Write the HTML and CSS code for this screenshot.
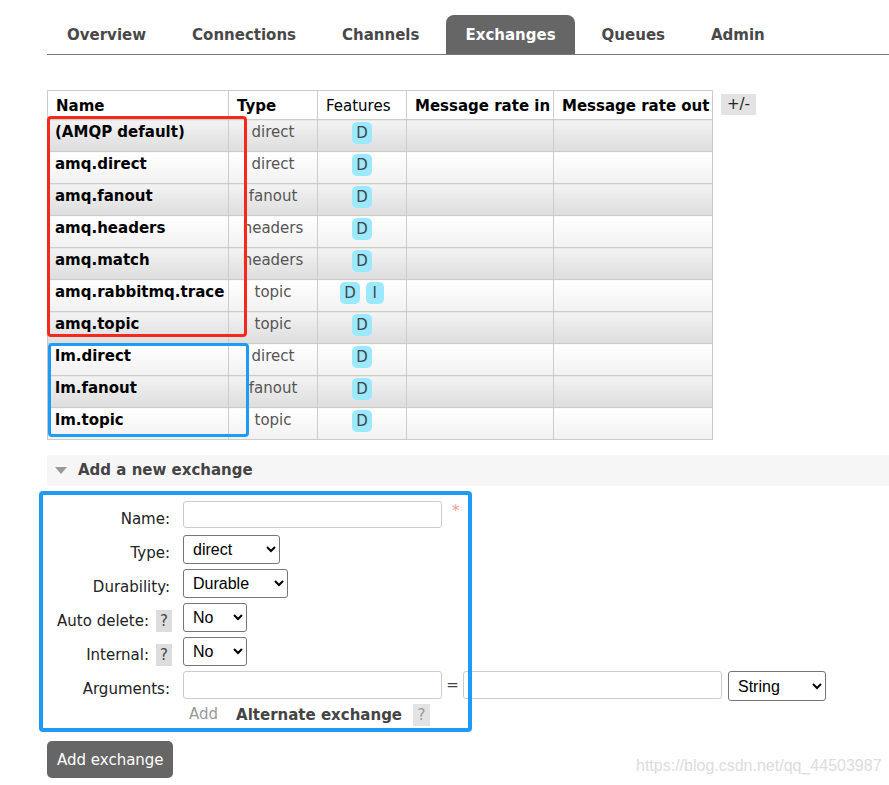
FILE: index.html
```html
<!DOCTYPE html>
<html>
<head>
<meta charset="utf-8">
<title>Exchanges</title>
<link rel="stylesheet" href="styles.css">
</head>
<body>
<div class="page">
  <ul class="tabs">
    <li class="tab">Overview</li>
    <li class="tab">Connections</li>
    <li class="tab">Channels</li>
    <li class="tab active">Exchanges</li>
    <li class="tab">Queues</li>
    <li class="tab">Admin</li>
  </ul>

  <div class="list-wrap">
    <table class="list">
      <thead>
        <tr>
          <th class="c-name">Name</th>
          <th class="c-type">Type</th>
          <th class="c-feat plain">Features</th>
          <th class="c-in">Message rate in</th>
          <th class="c-out">Message rate out</th>
        </tr>
      </thead>
      <tbody>
        <tr class="alt1"><td class="name">(AMQP default)</td><td class="type">direct</td><td class="feat"><span class="badge">D</span></td><td></td><td></td></tr>
        <tr class="alt2"><td class="name">amq.direct</td><td class="type">direct</td><td class="feat"><span class="badge">D</span></td><td></td><td></td></tr>
        <tr class="alt1"><td class="name">amq.fanout</td><td class="type">fanout</td><td class="feat"><span class="badge">D</span></td><td></td><td></td></tr>
        <tr class="alt2"><td class="name">amq.headers</td><td class="type">headers</td><td class="feat"><span class="badge">D</span></td><td></td><td></td></tr>
        <tr class="alt1"><td class="name">amq.match</td><td class="type">headers</td><td class="feat"><span class="badge">D</span></td><td></td><td></td></tr>
        <tr class="alt2"><td class="name">amq.rabbitmq.trace</td><td class="type">topic</td><td class="feat"><span class="badge">D</span><span class="badge">I</span></td><td></td><td></td></tr>
        <tr class="alt1"><td class="name">amq.topic</td><td class="type">topic</td><td class="feat"><span class="badge">D</span></td><td></td><td></td></tr>
        <tr class="alt2"><td class="name">lm.direct</td><td class="type">direct</td><td class="feat"><span class="badge">D</span></td><td></td><td></td></tr>
        <tr class="alt1"><td class="name">lm.fanout</td><td class="type">fanout</td><td class="feat"><span class="badge">D</span></td><td></td><td></td></tr>
        <tr class="alt2"><td class="name">lm.topic</td><td class="type">topic</td><td class="feat"><span class="badge">D</span></td><td></td><td></td></tr>
      </tbody>
    </table>
    <span class="toggle">+/-</span>
  </div>

  <section class="section">
    <h2 class="section-head"><span class="arrow"></span>Add a new exchange</h2>
    <form class="form">
      <div class="frow">
        <label class="flabel">Name:</label>
        <div class="field"><input class="text" type="text"><span class="req">*</span></div>
      </div>
      <div class="frow">
        <label class="flabel">Type:</label>
        <div class="field">
          <select class="sel sel-type"><option>direct</option><option>fanout</option><option>headers</option><option>topic</option></select>
        </div>
      </div>
      <div class="frow">
        <label class="flabel">Durability:</label>
        <div class="field">
          <select class="sel sel-dur"><option>Durable</option><option>Transient</option></select>
        </div>
      </div>
      <div class="frow">
        <label class="flabel">Auto delete:<span class="help">?</span></label>
        <div class="field">
          <select class="sel sel-no"><option>No</option><option>Yes</option></select>
        </div>
      </div>
      <div class="frow">
        <label class="flabel">Internal:<span class="help">?</span></label>
        <div class="field">
          <select class="sel sel-no"><option>No</option><option>Yes</option></select>
        </div>
      </div>
      <div class="frow">
        <label class="flabel">Arguments:</label>
        <div class="field">
          <input class="text arg" type="text"><span class="eq">=</span><input class="text arg" type="text">
          <select class="sel sel-str"><option>String</option><option>Number</option><option>Boolean</option><option>List</option></select>
        </div>
      </div>
      <div class="addrow">
        <span class="add">Add</span>
        <span class="alt">Alternate exchange</span>
        <span class="help muted">?</span>
      </div>
    </form>
    <button class="btn" type="button">Add exchange</button>
  </section>

  <div class="mark mark-red"></div>
  <div class="mark mark-blue1"></div>
  <div class="mark mark-blue2"></div>
  <div class="watermark">https://blog.csdn.net/qq_44503987</div>
</div>
</body>
</html>
```

FILE: styles.css
```css
* { box-sizing: border-box; }

body {
  margin: 0;
  background: #fff;
  color: #000;
  font-family: "DejaVu Sans", Verdana, sans-serif;
  font-size: 15px;
}

.page {
  position: relative;
  padding-left: 47px;
  min-height: 785px;
  overflow: hidden;
}

/* tabs */
.tabs {
  list-style: none;
  margin: 0;
  padding: 15px 0 0;
  display: flex;
  gap: 6px;
  border-bottom: 1px solid #777;
}
.tab {
  height: 39px;
  padding: 1px 20px 0;
  line-height: 38px;
  font-weight: bold;
  color: #484848;
  border-radius: 8px 8px 0 0;
}
.tab.active {
  background: #666;
  color: #fff;
  padding: 1px 19px 0;
  margin: 0 1px;
}

/* list table */
.list-wrap {
  display: flex;
  align-items: flex-start;
  margin-top: 35px;
}
.list {
  border-collapse: collapse;
  table-layout: fixed;
  width: 666px;
}
.list th, .list td {
  border: 1px solid #ccc;
  padding: 0 8px;
}
.list th {
  height: 29px;
  padding-top: 2px;
  text-align: left;
  font-weight: bold;
  background: #fff;
  vertical-align: middle;
  white-space: nowrap;
}
.list th.plain { font-weight: normal; }
.c-name { width: 181px; }
.c-type { width: 89px; }
.c-feat { width: 89px; }
.c-in { width: 147px; }
.c-out { width: 159px; }

.list tbody tr { height: 32px; }
.list td {
  vertical-align: top;
  padding-top: 1px;
  line-height: 22px;
  white-space: nowrap;
}
.list tr.alt1 td { background: linear-gradient(#f3f3f3, #dddddd); }
.list tr.alt2 td { background: linear-gradient(#ffffff, #f1f1f1); }
.list td.name { font-weight: bold; padding-left: 7px; }
.list td.type { text-align: center; color: #555; }
.list td.feat { text-align: center; padding-top: 2px; }

.badge {
  display: inline-block;
  min-width: 18px;
  padding: 0 4px;
  line-height: 22px;
  border-radius: 5px;
  background: #9ae9ff;
  color: #444;
  text-align: center;
  margin: 0 3px;
}

.toggle {
  margin: 4px 0 0 8px;
  padding: 0 6px;
  line-height: 21px;
  background: #e3e3e3;
  color: #222;
}

/* section */
.section { margin-top: 15px; }
.section-head {
  margin: 0;
  height: 31px;
  line-height: 31px;
  padding-left: 8px;
  background: #f6f6f6;
  font-size: 15px;
  font-weight: bold;
  color: #444;
  display: flex;
  align-items: center;
}
.arrow {
  width: 0;
  height: 0;
  border-left: 6.5px solid transparent;
  border-right: 6.5px solid transparent;
  border-top: 7px solid #999;
  margin-right: 11px;
}

.form { padding-top: 15px; }
.frow {
  display: flex;
  height: 34px;
}
.flabel {
  width: 123px;
  margin-right: 13px;
  padding-top: 7px;
  line-height: 22px;
  text-align: right;
  color: #222;
  white-space: nowrap;
}
.field {
  display: flex;
  align-items: flex-start;
}
.help {
  display: inline-block;
  width: 16px;
  line-height: 22px;
  margin-left: 7px;
  margin-right: -2px;
  background: #ddd;
  color: #444;
  text-align: center;
  vertical-align: top;
}
.help.muted {
  background: #e3e3e3;
  color: #999;
  margin: 0 0 0 11px;
  width: 17px;
}

.text {
  width: 259px;
  height: 27px;
  margin: 0;
  padding: 0 4px;
  border: 1px solid #ccc;
  border-radius: 3px;
  background: #fff;
  font-family: "Liberation Sans", Arial, sans-serif;
  font-size: 15px;
}
.text.arg { height: 28px; }
.req {
  margin-left: 10px;
  color: #f79a9a;
  font-size: 15px;
  line-height: 20px;
}
.eq {
  width: 21px;
  line-height: 28px;
  text-align: center;
  color: #444;
}

.sel {
  height: 29px;
  margin: 0;
  padding: 0 0 0 5px;
  border: 1px solid #767676;
  border-radius: 3px;
  background: #fff;
  color: #000;
  font-family: "Liberation Sans", Arial, sans-serif;
  font-size: 16px;
}
.sel-type { width: 97px; }
.sel-dur { width: 105px; }
.sel-no { width: 64px; }
.sel-str { width: 98px; height: 30px; margin-left: 6px; }

.addrow {
  display: flex;
  align-items: center;
  height: 24px;
  margin-top: -2px;
  padding-left: 136px;
}
.add {
  padding-left: 6px;
  color: #999;
  margin-top: -3px;
}
.alt {
  margin-left: 18px;
  font-weight: bold;
  color: #444;
}

.btn {
  display: block;
  margin-top: 14px;
  height: 37px;
  padding: 0 9px 0 10px;
  border: 0;
  border-radius: 5px;
  background: #666;
  color: #fff;
  font-family: "DejaVu Sans", Verdana, sans-serif;
  font-size: 15px;
}

/* annotation overlays */
.mark {
  position: absolute;
  border-radius: 4px;
  pointer-events: none;
}
.mark-red {
  left: 47px; top: 116px; width: 200px; height: 221px;
  border: 3px solid #f5281e;
}
.mark-blue1 {
  left: 48px; top: 343px; width: 201px; height: 94px;
  border: 3px solid #1f9bf5;
}
.mark-blue2 {
  left: 39px; top: 491px; width: 433px; height: 241px;
  border: 4px solid #1f9bf5;
}

.watermark {
  position: absolute;
  left: 636px;
  top: 757px;
  font-family: "Liberation Sans", Arial, sans-serif;
  font-size: 16px;
  line-height: 18px;
  color: #dcdcdc;
  white-space: nowrap;
}
```
